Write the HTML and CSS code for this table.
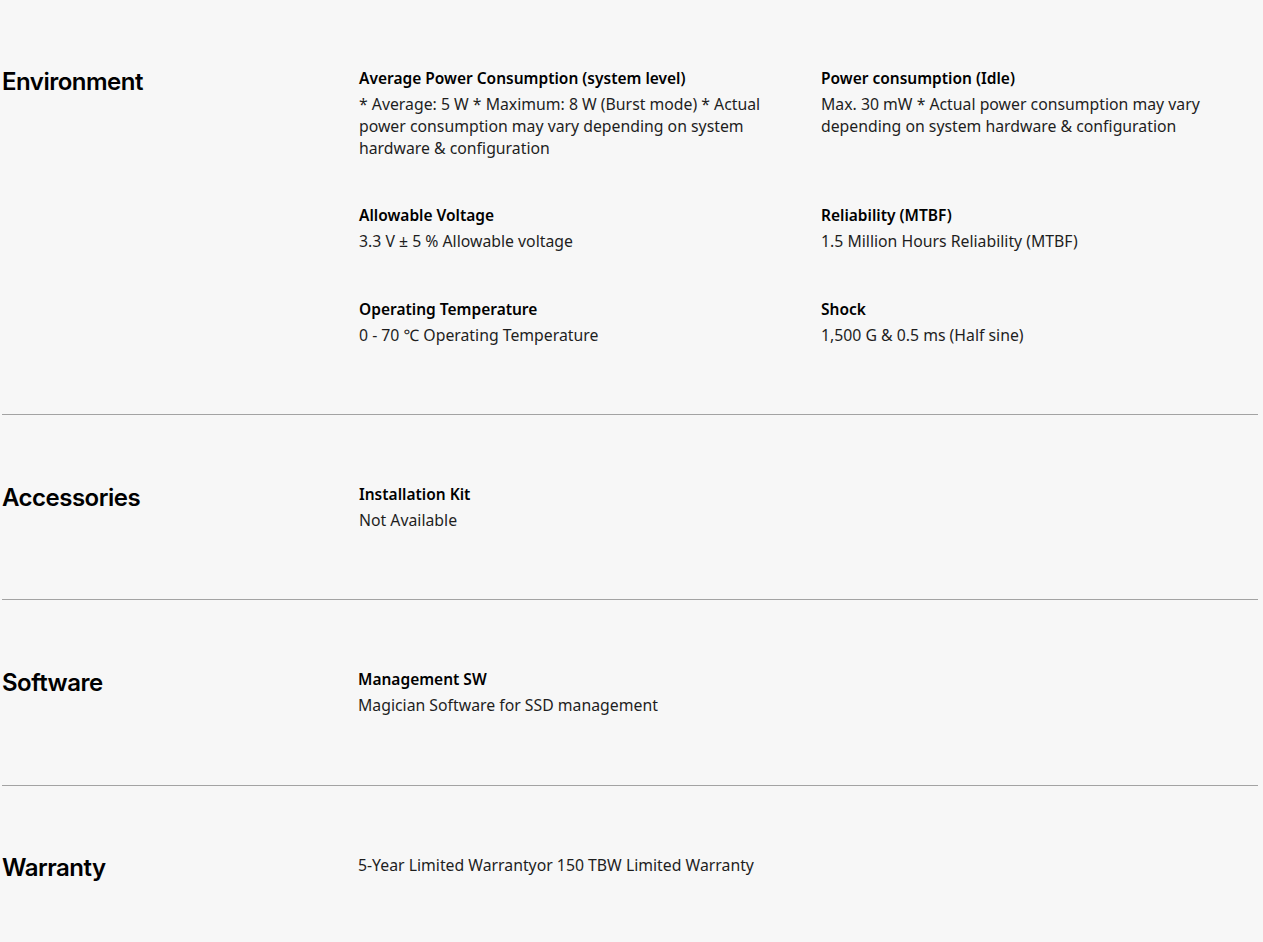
FILE: index.html
```html
<!DOCTYPE html>
<html lang="en">
<head>
<meta charset="utf-8">
<title>Specs</title>
<link rel="stylesheet" href="styles.css">
</head>
<body>
<div class="specs">
  <section class="spec-section first">
    <h2 class="spec-title">Environment</h2>
    <div class="spec-items">
      <div class="spec-item">
        <div class="spec-label">Average Power Consumption (system level)</div>
        <div class="spec-value">* Average: 5 W * Maximum: 8 W (Burst mode) * Actual power consumption may vary depending on system hardware &amp; configuration</div>
      </div>
      <div class="spec-item">
        <div class="spec-label">Power consumption (Idle)</div>
        <div class="spec-value">Max. 30 mW * Actual power consumption may vary depending on system hardware &amp; configuration</div>
      </div>
      <div class="spec-item">
        <div class="spec-label">Allowable Voltage</div>
        <div class="spec-value">3.3 V ± 5 % Allowable voltage</div>
      </div>
      <div class="spec-item">
        <div class="spec-label">Reliability (MTBF)</div>
        <div class="spec-value">1.5 Million Hours Reliability (MTBF)</div>
      </div>
      <div class="spec-item row-last">
        <div class="spec-label">Operating Temperature</div>
        <div class="spec-value">0 - 70 ℃ Operating Temperature</div>
      </div>
      <div class="spec-item row-last">
        <div class="spec-label">Shock</div>
        <div class="spec-value">1,500 G &amp; 0.5 ms (Half sine)</div>
      </div>
    </div>
  </section>
  <section class="spec-section">
    <h2 class="spec-title">Accessories</h2>
    <div class="spec-items">
      <div class="spec-item">
        <div class="spec-label">Installation Kit</div>
        <div class="spec-value">Not Available</div>
      </div>
    </div>
  </section>
  <section class="spec-section tall">
    <h2 class="spec-title">Software</h2>
    <div class="spec-items shift">
      <div class="spec-item">
        <div class="spec-label">Management SW</div>
        <div class="spec-value">Magician Software for SSD management</div>
      </div>
    </div>
  </section>
  <section class="spec-section value-only">
    <h2 class="spec-title">Warranty</h2>
    <div class="spec-items shift">
      <div class="spec-item">
        <div class="spec-value">5-Year Limited Warrantyor 150 TBW Limited Warranty</div>
      </div>
    </div>
  </section>
</div>
</body>
</html>
```
FILE: styles.css
```css
html, body {
  margin: 0;
  padding: 0;
  background: #f7f7f7;
}
body {
  font-family: "Noto Sans", "Open Sans", sans-serif;
  color: #1a1a1a;
}
.specs {
  margin: 0 5px 0 2px;
}
.spec-section {
  display: grid;
  grid-template-columns: 357px 1fr;
  padding: 67px 0 68px;
  border-bottom: 1px solid #a3a3a3;
}
.spec-section.first {
  padding-top: 66px;
  padding-bottom: 68px;
}
.spec-section.tall {
  padding-bottom: 69px;
}
.spec-section.value-only {
  padding-top: 68px;
}
.spec-section.value-only .spec-title {
  margin-top: -2px;
}
.spec-section:last-child {
  border-bottom: none;
}
.spec-title {
  margin: 0;
  padding-top: 1px;
  font-family: Inter, "Open Sans", sans-serif;
  font-size: 24px;
  line-height: 30px;
  font-weight: 600;
  letter-spacing: -0.5px;
  color: #000;
}
.spec-items {
  display: grid;
  grid-template-columns: 420px 420px;
  column-gap: 42px;
  row-gap: 44px;
}
.spec-items.shift {
  margin-left: -1px;
}
.spec-item.row-last {
  padding-top: 1px;
}
.spec-label {
  font-size: 15.5px;
  line-height: 24px;
  font-weight: 600;
  color: #000;
  margin-bottom: 3px;
}
.spec-value {
  font-size: 15.8px;
  line-height: 22px;
  font-weight: 400;
  color: #1e1e1e;
}
```
